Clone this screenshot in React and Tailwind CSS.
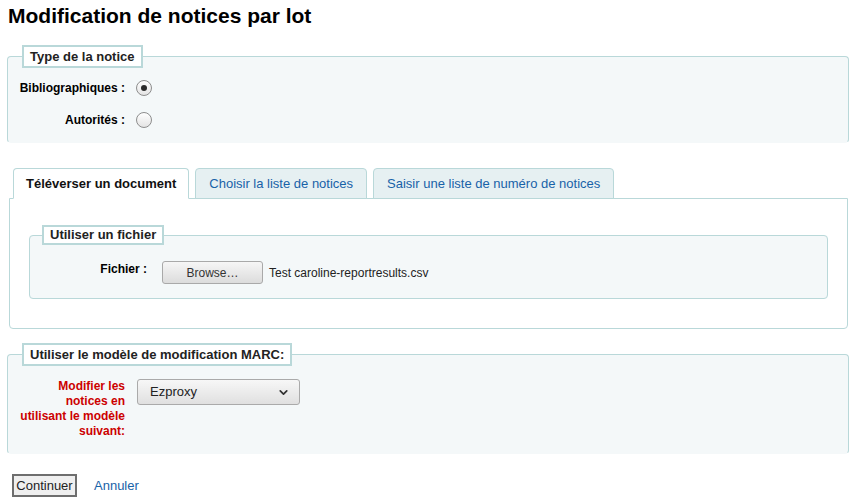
import { ChevronDown } from "lucide-react";

const labelCls = "w-[117px] shrink-0 text-right text-[12px] font-bold leading-[15px]";

function Radio({ checked }) {
  return (
    <span className="flex h-[16px] w-[16px] items-center justify-center rounded-full border border-[#8d8d8d] bg-gradient-to-b from-white to-[#e4e4e4]">
      {checked ? <span className="h-[6px] w-[6px] rounded-full bg-[#2b2b2b]" /> : null}
    </span>
  );
}

function Legend({ children, className = "" }) {
  return (
    <legend
      className={`border-2 border-[#b9d8d9] bg-white px-[6px] text-[13px] font-bold text-[#222] ${className}`}
    >
      {children}
    </legend>
  );
}

export default function App() {
  const tabs = [
    { label: "Téléverser un document", active: true },
    { label: "Choisir la liste de notices", active: false },
    { label: "Saisir une liste de numéro de notices", active: false }
  ];

  return (
    <div className="min-h-[502px] bg-white font-['Liberation_Sans',Arial,sans-serif] text-black">
      <h1 className="pl-[8px] pt-[4px] text-[21px] font-bold leading-[24px]">
        Modification de notices par lot
      </h1>

      <fieldset className="ml-[7px] mr-[9px] mt-[17px] rounded-[4px] border border-[#b9d8d9] border-b-transparent bg-[#f4f8f9] pb-[6px] pt-[4px]">
        <Legend className="ml-[14px] leading-[19px]">Type de la notice</Legend>
        <div className="flex h-[32px] items-center">
          <span className={labelCls}>Bibliographiques :</span>
          <span className="ml-[11px]">
            <Radio checked />
          </span>
        </div>
        <div className="flex h-[32px] items-center">
          <span className={labelCls}>Autorités :</span>
          <span className="ml-[11px]">
            <Radio />
          </span>
        </div>
      </fieldset>

      <div className="ml-[9px] mr-[10px] mt-[25px]">
        <ul className="flex gap-[6px] pl-[4px]">
          {tabs.map((tab) => (
            <li
              key={tab.label}
              className={
                tab.active
                  ? "relative z-10 -mb-px flex h-[31px] items-center rounded-t-[4px] border border-b-white border-[#b9d8d9] bg-white px-[12px] text-[13px] font-bold text-[#111]"
                  : "-mb-px flex h-[31px] items-center rounded-t-[4px] border border-[#b9d8d9] bg-[#e6f0f2] px-[13px] text-[13px] text-[#1862a8]"
              }
            >
              {tab.label}
            </li>
          ))}
        </ul>
        <div className="rounded-b-[4px] border border-[#b9d8d9] bg-white px-[19px] pb-[29px] pt-[26px]">
          <fieldset className="rounded-[4px] border border-[#b9d8d9] bg-[#f4f8f9] pb-[14px] pt-[16px]">
            <Legend className="ml-[12px] leading-[16px]">Utiliser un fichier</Legend>
            <div className="flex items-start">
              <span className={`${labelCls} pt-[1px]`}>Fichier :</span>
              <div className="ml-[15px] flex items-center">
                <button className="h-[23px] w-[101px] rounded-[3px] border border-[#a9a9a9] bg-gradient-to-b from-[#f6f6f6] to-[#dcdcdc] text-[12px] text-[#333]">
                  Browse…
                </button>
                <span className="ml-[6px] text-[12px] text-[#222]">Test caroline-reportresults.csv</span>
              </div>
            </div>
          </fieldset>
        </div>
      </div>

      <fieldset className="ml-[7px] mr-[9px] mt-[14px] rounded-[4px] border border-[#b9d8d9] border-b-transparent bg-[#f4f8f9] pb-[14px] pt-[13px]">
        <Legend className="ml-[14px] leading-[19px]">Utiliser le modèle de modification MARC:</Legend>
        <div className="flex items-start">
          <span className={`${labelCls} text-[#cc0000]`}>
            Modifier les
            <br />
            notices en
            <br />
            utilisant le modèle
            <br />
            suivant:
          </span>
          <div className="ml-[12px] flex h-[26px] w-[163px] items-center justify-between rounded-[3px] border border-[#aaaaaa] bg-gradient-to-b from-[#f7f7f7] to-[#e0e0e0] pl-[12px] pr-[9px] text-[13px] text-[#222]">
            <span>Ezproxy</span>
            <ChevronDown size={13} strokeWidth={3.2} className="text-[#333]" />
          </div>
        </div>
      </fieldset>

      <div className="ml-[12px] mt-[20px] flex items-center">
        <button className="h-[23px] w-[65px] border-2 border-[#6e6e6e] bg-[#efefef] text-[13px] text-[#222]">
          Continuer
        </button>
        <a className="ml-[17px] text-[13px] text-[#1862a8]">Annuler</a>
      </div>
    </div>
  );
}
